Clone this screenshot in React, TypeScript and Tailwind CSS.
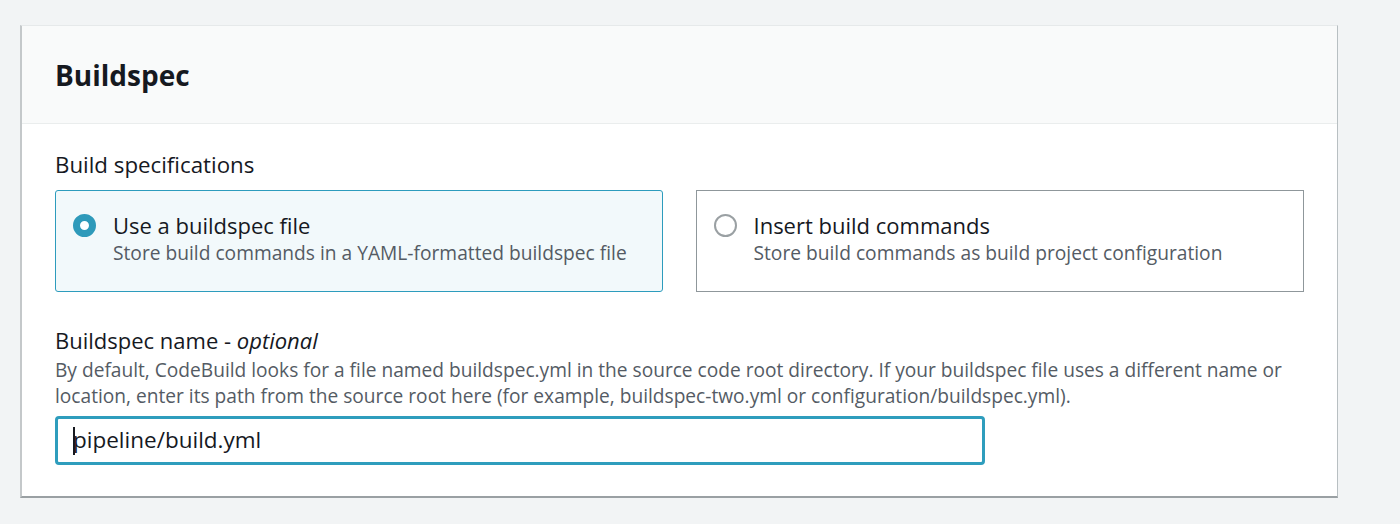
import React from "react";

export default function App() {
  const font = { fontFamily: '"Open Sans", "Noto Sans", sans-serif' };
  return (
    <div className="w-[1400px] h-[524px] bg-[#f2f4f5] pt-[25px] pl-[20px]" style={font}>
      <div className="w-[1318px] bg-white border-l-2 border-l-[#c4c8ca] border-r border-r-[#b8bfc2] border-b-2 border-b-[#9aa0a3] border-t border-t-[#e6e9ea]">
        <div className="h-[98px] bg-[#f9fafa] border-b border-b-[#eaeded] flex items-center px-[33px]">
          <h2 className="text-[28px] font-bold text-[#16191f] leading-none">Buildspec</h2>
        </div>
        <div className="px-[33px] pt-[27px] pb-[31px]">
          <div className="text-[22.3px] leading-[28px] text-[#16191f]">Build specifications</div>
          <div className="mt-[11px] flex gap-[33px]">
            <div className="w-[608px] h-[102px] rounded-[3px] border border-[#2d9cbd] bg-[#f2f9fb] flex items-start pl-[17px] pt-[20px]">
              <span className="mt-[3px] w-[23px] h-[23px] rounded-full border-[7px] border-[#2e9aba] bg-white shrink-0"></span>
              <div className="ml-[17px]">
                <div className="text-[22px] leading-[28px] text-[#16191f]">Use a buildspec file</div>
                <div className="text-[19.2px] leading-[26px] text-[#545b64] mt-[1px]">Store build commands in a YAML-formatted buildspec file</div>
              </div>
            </div>
            <div className="w-[609px] h-[102px] border border-[#8f979b] bg-white flex items-start pl-[17px] pt-[20px]">
              <span className="mt-[3px] w-[23px] h-[23px] rounded-full border-2 border-[#9aa0a3] bg-white shrink-0"></span>
              <div className="ml-[17px]">
                <div className="text-[22px] leading-[28px] text-[#16191f]">Insert build commands</div>
                <div className="text-[19.2px] leading-[26px] text-[#545b64] mt-[1px]">Store build commands as build project configuration</div>
              </div>
            </div>
          </div>
          <div className="mt-[34px] text-[22px] leading-[28px] text-[#16191f]">
            Buildspec name - <i>optional</i>
          </div>
          <div className="text-[19.15px] leading-[26px] text-[#545b64] mt-[3px] whitespace-nowrap">
            By default, CodeBuild looks for a file named buildspec.yml in the source code root directory. If your buildspec file uses a different name or
            <br />
            location, enter its path from the source root here (for example, buildspec-two.yml or configuration/buildspec.yml).
          </div>
          <div className="mt-[7px] w-[930px] h-[49px] rounded-[4px] border-[3px] border-[#2e9dbd] flex items-center pl-[15px]">
            <span className="w-[2px] h-[28px] bg-[#16191f] mr-[-2px]"></span>
            <span className="text-[22.5px] text-[#16191f] leading-none">pipeline/build.yml</span>
          </div>
        </div>
      </div>
    </div>
  );
}
